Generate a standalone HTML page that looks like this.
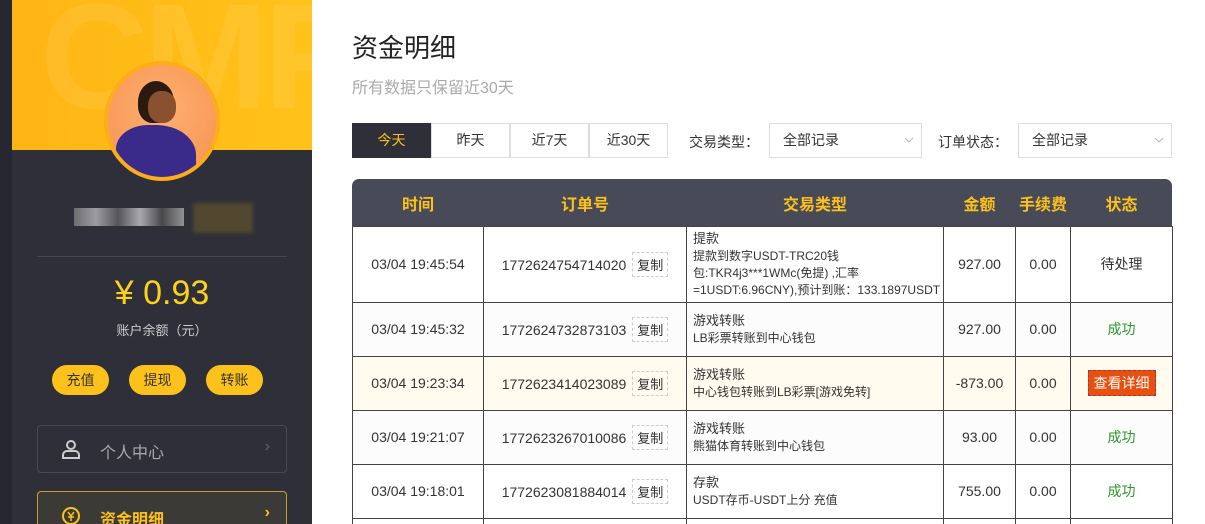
<!DOCTYPE html>
<html><head><meta charset="utf-8"><style>
*{box-sizing:border-box;margin:0;padding:0}
html,body{width:1205px;height:524px;overflow:hidden}
body{background:#fff;font-family:"Liberation Sans","Noto Sans CJK SC",sans-serif;position:relative;color:#333}
#wrap{position:absolute;left:0;top:0;width:1205px;height:524px;overflow:hidden}
.abs{position:absolute}
.strip{left:0;top:0;width:12px;height:524px;background:#262730}
.side{left:12px;top:0;width:300px;height:524px;background:#2e2f39}
.hdr{left:12px;top:0;width:300px;height:150px;background:linear-gradient(90deg,#ffb514,#ffc21a);overflow:hidden}
.hdr span{position:absolute;left:28px;top:-30px;font-size:150px;font-weight:bold;color:rgba(255,255,255,.08);letter-spacing:-5px}
.av{left:104px;top:61px;width:116px;height:120px;border-radius:50%;background:#fdac1a;padding:4px}
.av>div{width:108px;height:112px;border-radius:50%;background:radial-gradient(circle at 50% 40%,#ffb070,#f59050);overflow:hidden;position:relative}
.btn{top:365px;width:57px;height:30px;border-radius:15px;background:#fcc21b;color:#333;font-size:14px;text-align:center;line-height:30px}
.menu{left:37px;width:250px;height:48px;border:1px solid #484a55;border-radius:4px}
th{color:#fcc21b;font-size:16px;font-weight:bold;height:46px}
td{border:1px solid #444;font-size:14px;text-align:center;color:#333}
table{border-collapse:collapse;position:absolute;left:352px;top:180px;width:820px;table-layout:fixed}
.tp{text-align:left;padding-left:6px;font-size:12px;line-height:17px;color:#333}
.tp b{font-weight:normal;font-size:13px}
.cp{display:inline-block;border:1px dashed #ccc;padding:2px 4px;font-size:13px;margin-left:6px}
.ok{color:#2a9a2a}
.tab{top:123px;height:35px;border:1px solid #ddd;font-size:14px;text-align:center;line-height:33px;width:79px}
.sel{top:123px;height:35px;border:1px solid #ddd;font-size:14px;line-height:33px;padding-left:13px;color:#333}
</style></head><body><div id="wrap">
<div class="abs strip"></div><div class="abs side"></div>
<div class="abs hdr"><span>CMF</span></div>
<div class="abs av"><div>
<div style="position:absolute;left:30px;top:16px;width:36px;height:42px;background:#2a1a10;border-radius:50% 50% 40% 40%"></div>
<div style="position:absolute;left:40px;top:26px;width:28px;height:32px;background:#8a5030;border-radius:45%"></div>
<div style="position:absolute;left:8px;top:60px;width:80px;height:60px;background:#3a2a8a;border-radius:40% 50% 0 0"></div>
</div></div>
<div class="abs" style="left:74px;top:208px;width:110px;height:18px;background:linear-gradient(90deg,#888,#ccc,#666,#ddd,#555,#bbb);opacity:.7"></div>
<div class="abs" style="left:193px;top:203px;width:60px;height:30px;background:#6a5a2a;opacity:.6;filter:blur(2px)"></div>
<div class="abs" style="left:37px;top:256px;width:250px;height:1px;background:#444652"></div>
<div class="abs" style="left:0;width:324px;top:274px;text-align:center;color:#fcd21b;font-size:34px">¥ 0.93</div>
<div class="abs" style="left:0;width:324px;top:320px;text-align:center;color:#ccc;font-size:13px">账户余额（元）</div>
<div class="abs btn" style="left:52px">充值</div><div class="abs btn" style="left:129px">提现</div><div class="abs btn" style="left:206px">转账</div>
<div class="abs menu" style="top:425px"><svg class="abs" style="left:23px;top:13px" width="20" height="20" viewBox="0 0 20 20" fill="none" stroke="#ccc" stroke-width="2"><circle cx="10" cy="6" r="4"/><path d="M2 19v-3a4 4 0 0 1 4-4h8a4 4 0 0 1 4 4v3z"/></svg><span class="abs" style="left:62px;top:13px;color:#aaa;font-size:16px">个人中心</span><span class="abs" style="right:16px;top:12px;color:#666">›</span></div>
<div class="abs menu" style="top:491px;border-color:#c9a030;background:#3c3a36"><svg class="abs" style="left:23px;top:14px" width="20" height="20" viewBox="0 0 20 20" fill="none" stroke="#fcc21b" stroke-width="2"><circle cx="10" cy="10" r="8"/><path d="M7 6l3 4 3-4M10 10v5M7 11h6" stroke-width="1.5"/></svg><span class="abs" style="left:62px;top:14px;color:#fcc21b;font-size:16px;font-weight:bold">资金明细</span><span class="abs" style="right:16px;top:12px;color:#fcc21b;font-weight:bold">›</span></div>
<div class="abs" style="left:352px;top:28px;font-size:26px;color:#222">资金明细</div>
<div class="abs" style="left:352px;top:74px;font-size:16px;color:#aaa">所有数据只保留近30天</div>
<div class="abs tab" style="left:352px;background:#2e2f39;color:#fcc21b;border-color:#2e2f39">今天</div>
<div class="abs tab" style="left:431px">昨天</div><div class="abs tab" style="left:510px">近7天</div><div class="abs tab" style="left:589px">近30天</div>
<div class="abs" style="left:689px;top:132px;font-size:14px">交易类型：</div>
<div class="abs sel" style="left:769px;width:153px">全部记录<svg class="abs" style="right:7px;top:13px" width="10" height="6"><path d="M1 1l4 4 4-4" fill="none" stroke="#bbb"/></svg></div>
<div class="abs" style="left:938px;top:132px;font-size:14px">订单状态：</div>
<div class="abs sel" style="left:1018px;width:154px">全部记录<svg class="abs" style="right:7px;top:13px" width="10" height="6"><path d="M1 1l4 4 4-4" fill="none" stroke="#bbb"/></svg></div>
<div class="abs" style="left:352px;top:179px;width:820px;height:48px;background:#494a58;border-radius:7px 7px 0 0"></div>
<table>
<colgroup><col style="width:131px"><col style="width:203px"><col style="width:257px"><col style="width:72px"><col style="width:55px"><col style="width:102px"></colgroup>
<tr><th>时间</th><th>订单号</th><th>交易类型</th><th>金额</th><th>手续费</th><th>状态</th></tr>
<tr style="height:76px"><td>03/04 19:45:54</td><td>1772624754714020<span class="cp">复制</span></td><td class="tp"><b>提款</b><br>提款到数字USDT-TRC20钱<br>包:TKR4j3***1WMc(免提) ,汇率<br>=1USDT:6.96CNY),预计到账：133.1897USDT</td><td>927.00</td><td>0.00</td><td>待处理</td></tr>
<tr style="height:54px;background:#fcfcfc"><td>03/04 19:45:32</td><td>1772624732873103<span class="cp">复制</span></td><td class="tp"><b>游戏转账</b><br>LB彩票转账到中心钱包</td><td>927.00</td><td>0.00</td><td class="ok">成功</td></tr>
<tr style="height:54px;background:#fffbef"><td>03/04 19:23:34</td><td>1772623414023089<span class="cp">复制</span></td><td class="tp"><b>游戏转账</b><br>中心钱包转账到LB彩票[游戏免转]</td><td>-873.00</td><td>0.00</td><td><span style="background:#e8500f;color:#fff;padding:4px 5px;border:1px dashed #a33">查看详细</span></td></tr>
<tr style="height:54px;background:#fcfcfc"><td>03/04 19:21:07</td><td>1772623267010086<span class="cp">复制</span></td><td class="tp"><b>游戏转账</b><br>熊猫体育转账到中心钱包</td><td>93.00</td><td>0.00</td><td class="ok">成功</td></tr>
<tr style="height:54px"><td>03/04 19:18:01</td><td>1772623081884014<span class="cp">复制</span></td><td class="tp"><b>存款</b><br>USDT存币-USDT上分 充值</td><td>755.00</td><td>0.00</td><td class="ok">成功</td></tr>
<tr style="height:20px"><td></td><td></td><td></td><td></td><td></td><td></td></tr>
</table>
</div></body></html>
